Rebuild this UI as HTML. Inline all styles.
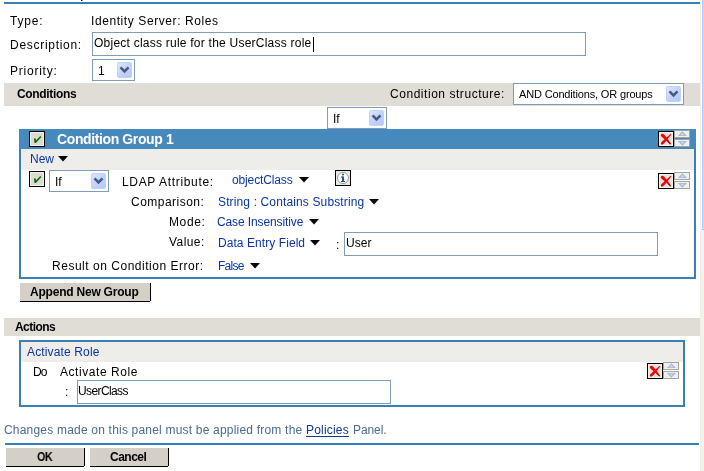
<!DOCTYPE html>
<html><head><meta charset="utf-8">
<style>
html,body{margin:0;padding:0;background:#fff;width:704px;height:471px;overflow:hidden;position:relative}
body{font-family:"Liberation Sans",sans-serif;font-size:12px;color:#000}
.a{position:absolute}
.a svg{display:block}
.t{position:absolute;white-space:nowrap;font-size:12px;line-height:12px;will-change:transform}
.dd{position:absolute;width:15px;height:16px;box-sizing:border-box;border-radius:2px;
 background:linear-gradient(135deg,#dce6fd 0%,#c3d3fd 50%,#b4c8fa 100%);border:1px solid #c3d2f4}
.dd svg{position:absolute;left:-1px;top:-1px}
</style></head><body>
<div class="a" style="left:700px;top:0px;width:4px;height:471px;background:#efeee8;"></div>
<div class="a" style="left:701px;top:230px;width:3px;height:241px;background:#f3f2ed;"></div>
<div class="a" style="left:701px;top:0px;width:1px;height:229px;background:#fdfdfb;"></div>
<div class="a" style="left:702px;top:0px;width:1px;height:229px;background:#b9caf4;"></div>
<div class="a" style="left:703px;top:0px;width:1px;height:228px;background:#c9d7fc;"></div>
<div class="a" style="left:703px;top:228px;width:1px;height:1px;background:#eef2fd;"></div>
<div class="a" style="left:703px;top:229px;width:1px;height:1px;background:#98b0e4;"></div>
<div class="a" style="left:702px;top:229px;width:1px;height:1px;background:#c0cbe6;"></div>
<div class="a" style="left:81px;top:0px;width:1px;height:1px;background:#000;"></div>
<div class="a" style="left:82px;top:0px;width:1px;height:1px;background:#999;"></div>
<div class="a" style="left:4px;top:2px;width:696px;height:2px;background:#3a7fb6;"></div>
<div class="t" style="left:10px;top:15px;font-size:12px;line-height:12px;letter-spacing:0.8px;">Type:</div>
<div class="t" style="left:91px;top:15px;font-size:12px;line-height:12px;letter-spacing:0.586px;">Identity Server: Roles</div>
<div class="t" style="left:10px;top:39px;font-size:12px;line-height:12px;letter-spacing:0.709px;">Description:</div>
<div class="a" style="left:92px;top:32px;width:494px;height:24px;box-sizing:border-box;border:1px solid #7f9db9;background:#fff"></div>
<div class="t" style="left:94px;top:37px;font-size:12px;line-height:12px;letter-spacing:0.236px;">Object class rule for the UserClass role</div>
<div class="a" style="left:313px;top:37px;width:1px;height:15px;background:#000;"></div>
<div class="t" style="left:10px;top:65px;font-size:12px;line-height:12px;letter-spacing:0.763px;">Priority:</div>
<div class="a" style="left:92px;top:59px;width:43px;height:22px;box-sizing:border-box;border:1px solid #7f9db9;background:#fff"></div>
<div class="t" style="left:98px;top:65px">1</div>
<div class="dd" style="left:117px;top:62px"><svg width="15" height="16" viewBox="0 0 15 16"><path d="M3.5 5.4 L7.5 9.4 L11.5 5.4" stroke="#475b7e" stroke-width="2.6" fill="none" stroke-linecap="butt"/></svg></div>
<div class="a" style="left:4px;top:83px;width:696px;height:23px;background:#e0ddd7;"></div>
<div class="t" style="left:17px;top:88px;font-size:12px;line-height:12px;letter-spacing:-0.344px;font-weight:bold;">Conditions</div>
<div class="t" style="left:390px;top:88px;font-size:12px;line-height:12px;letter-spacing:0.542px;">Condition structure:</div>
<div class="a" style="left:513px;top:83px;width:171px;height:22px;box-sizing:border-box;border:1px solid #7f9db9;background:#fff"></div>
<div class="t" style="left:519px;top:89px;font-size:11px;line-height:11px;letter-spacing:-0.158px;">AND Conditions, OR groups</div>
<div class="dd" style="left:666px;top:86px"><svg width="15" height="16" viewBox="0 0 15 16"><path d="M3.5 5.4 L7.5 9.4 L11.5 5.4" stroke="#475b7e" stroke-width="2.6" fill="none" stroke-linecap="butt"/></svg></div>
<div class="a" style="left:327px;top:107px;width:60px;height:22px;box-sizing:border-box;border:1px solid #7f9db9;background:#fff"></div>
<div class="t" style="left:333px;top:113px">If</div>
<div class="dd" style="left:369px;top:110px"><svg width="15" height="16" viewBox="0 0 15 16"><path d="M3.5 5.4 L7.5 9.4 L11.5 5.4" stroke="#475b7e" stroke-width="2.6" fill="none" stroke-linecap="butt"/></svg></div>
<div class="a" style="left:19px;top:129px;width:677px;height:150px;box-sizing:border-box;border:2px solid #3a7fb6;border-top:0"></div>
<div class="a" style="left:19px;top:129px;width:677px;height:20px;background:#4689bd;"></div>
<div class="a" style="left:21px;top:149px;width:673px;height:21px;background:#eeedea;"></div>
<div class="a" style="left:29px;top:131px;width:16px;height:16px"><svg width="16" height="16" viewBox="0 0 16 16"><rect x="0.5" y="0.5" width="15" height="15" fill="#dcdad1" stroke="#000"/><rect x="1.5" y="1.5" width="13" height="13" fill="none" stroke="#f3f2ec" stroke-width="1"/><path d="M4.9 7.4 L6.9 7.6 L7.0 9.6 L11.3 5.0 L12.4 6.1 L6.9 12.1 L5.5 12.1 Z" fill="#087008"/></svg></div>
<div class="t" style="left:57px;top:132px;font-size:14px;line-height:14px;letter-spacing:-0.388px;font-weight:bold;color:#fff;">Condition Group 1</div>
<div class="a" style="left:658px;top:131px;width:16px;height:16px"><svg width="16" height="16" viewBox="0 0 16 16"><rect x="0.5" y="0.5" width="15" height="15" fill="#e4e2dc" stroke="#000"/><rect x="1.5" y="1.5" width="13" height="13" fill="none" stroke="#f2f1ec"/><path d="M3.0 3.6 C3.6 2.6, 5.2 2.5, 6.0 3.4 L9.4 7.4 L13.0 12.8 L12.2 13.5 L8.0 9.4 L3.4 5.4 C2.7 4.8, 2.6 4.1, 3.0 3.6 Z" fill="#f00000"/><path d="M12.4 2.9 L13.3 3.5 L9.4 8.2 L5.4 12.9 C4.8 13.7, 3.5 13.8, 3.0 13.0 C2.7 12.3, 3.0 11.6, 3.6 11.0 L8.0 7.0 Z" fill="#f00000"/><path d="M9.6 9.0 L12.9 12.8 L12.3 13.5 L10.2 11.2 Z" fill="#7a0000" opacity="0.7"/><path d="M5.6 12.6 L8.6 9.2 L8.2 10.2 L5.6 13.2 Z" fill="#7a0000" opacity="0.5"/></svg></div>
<div class="a" style="left:674px;top:130px;width:16px;height:17px"><svg width="16" height="17" viewBox="0 0 16 17"><rect x="0.5" y="0.5" width="15" height="7" fill="#f1f0ec" stroke="#a6a29c"/><rect x="0.5" y="9.5" width="15" height="7" fill="#f1f0ec" stroke="#a6a29c"/><path d="M3.8 6.0 L8.4 1.2 L13.0 6.0 Z" fill="#9fbadd"/><path d="M6.2 5.2 L8.4 2.8 L10.6 5.2 Z" fill="#c6d9ef"/><path d="M3.8 10.9 L8.4 15.8 L13.0 10.9 Z" fill="#9fbadd"/><path d="M6.2 11.7 L8.4 14.1 L10.6 11.7 Z" fill="#c6d9ef"/></svg></div>
<div class="t" style="left:30px;top:153px;font-size:12px;line-height:12px;letter-spacing:-0.0px;color:#0a35a8;">New</div>
<div class="a" style="left:58px;top:156px;width:10px;height:6px"><svg width="10" height="6" viewBox="0 0 10 6"><path d="M0 0 L10 0 L5 5.5 Z" fill="#000"/></svg></div>
<div class="a" style="left:29px;top:171px;width:16px;height:16px"><svg width="16" height="16" viewBox="0 0 16 16"><rect x="0.5" y="0.5" width="15" height="15" fill="#dcdad1" stroke="#000"/><rect x="1.5" y="1.5" width="13" height="13" fill="none" stroke="#f3f2ec" stroke-width="1"/><path d="M4.9 7.4 L6.9 7.6 L7.0 9.6 L11.3 5.0 L12.4 6.1 L6.9 12.1 L5.5 12.1 Z" fill="#087008"/></svg></div>
<div class="a" style="left:49px;top:170px;width:60px;height:22px;box-sizing:border-box;border:1px solid #7f9db9;background:#fff"></div>
<div class="t" style="left:55px;top:176px">If</div>
<div class="dd" style="left:91px;top:173px"><svg width="15" height="16" viewBox="0 0 15 16"><path d="M3.5 5.4 L7.5 9.4 L11.5 5.4" stroke="#475b7e" stroke-width="2.6" fill="none" stroke-linecap="butt"/></svg></div>
<div class="t" style="left:122px;top:176px;font-size:12px;line-height:12px;letter-spacing:0.664px;">LDAP Attribute:</div>
<div class="t" style="left:232px;top:174px;font-size:12px;line-height:12px;letter-spacing:-0.14px;color:#0a35a8;">objectClass</div>
<div class="a" style="left:299px;top:177px;width:10px;height:6px"><svg width="10" height="6" viewBox="0 0 10 6"><path d="M0 0 L10 0 L5 5.5 Z" fill="#000"/></svg></div>
<div class="a" style="left:335px;top:170px;width:16px;height:16px"><svg width="16" height="16" viewBox="0 0 16 16"><rect x="0.5" y="0.5" width="15" height="15" fill="#e9e7df" stroke="#000"/><circle cx="8" cy="8" r="5.5" fill="#fff" stroke="#999" stroke-width="1"/><rect x="7" y="6.5" width="2" height="5" fill="#1b5a98"/><rect x="6" y="6.5" width="2" height="1" fill="#1b5a98"/><rect x="6" y="11" width="4" height="1" fill="#1b5a98"/><rect x="7" y="3.8" width="2" height="1.5" fill="#1b5a98"/></svg></div>
<div class="a" style="left:658px;top:173px;width:16px;height:16px"><svg width="16" height="16" viewBox="0 0 16 16"><rect x="0.5" y="0.5" width="15" height="15" fill="#e4e2dc" stroke="#000"/><rect x="1.5" y="1.5" width="13" height="13" fill="none" stroke="#f2f1ec"/><path d="M3.0 3.6 C3.6 2.6, 5.2 2.5, 6.0 3.4 L9.4 7.4 L13.0 12.8 L12.2 13.5 L8.0 9.4 L3.4 5.4 C2.7 4.8, 2.6 4.1, 3.0 3.6 Z" fill="#f00000"/><path d="M12.4 2.9 L13.3 3.5 L9.4 8.2 L5.4 12.9 C4.8 13.7, 3.5 13.8, 3.0 13.0 C2.7 12.3, 3.0 11.6, 3.6 11.0 L8.0 7.0 Z" fill="#f00000"/><path d="M9.6 9.0 L12.9 12.8 L12.3 13.5 L10.2 11.2 Z" fill="#7a0000" opacity="0.7"/><path d="M5.6 12.6 L8.6 9.2 L8.2 10.2 L5.6 13.2 Z" fill="#7a0000" opacity="0.5"/></svg></div>
<div class="a" style="left:674px;top:172px;width:16px;height:17px"><svg width="16" height="17" viewBox="0 0 16 17"><rect x="0.5" y="0.5" width="15" height="7" fill="#f1f0ec" stroke="#a6a29c"/><rect x="0.5" y="9.5" width="15" height="7" fill="#f1f0ec" stroke="#a6a29c"/><path d="M3.8 6.0 L8.4 1.2 L13.0 6.0 Z" fill="#9fbadd"/><path d="M6.2 5.2 L8.4 2.8 L10.6 5.2 Z" fill="#c6d9ef"/><path d="M3.8 10.9 L8.4 15.8 L13.0 10.9 Z" fill="#9fbadd"/><path d="M6.2 11.7 L8.4 14.1 L10.6 11.7 Z" fill="#c6d9ef"/></svg></div>
<div class="t" style="left:131px;top:196px;font-size:12px;line-height:12px;letter-spacing:0.48px;">Comparison:</div>
<div class="t" style="left:218px;top:196px;font-size:12px;line-height:12px;letter-spacing:0.135px;color:#0a35a8;">String : Contains Substring</div>
<div class="a" style="left:369px;top:199px;width:10px;height:6px"><svg width="10" height="6" viewBox="0 0 10 6"><path d="M0 0 L10 0 L5 5.5 Z" fill="#000"/></svg></div>
<div class="t" style="left:169px;top:216px;font-size:12px;line-height:12px;letter-spacing:0.625px;">Mode:</div>
<div class="t" style="left:217px;top:216px;font-size:12px;line-height:12px;letter-spacing:-0.113px;color:#0a35a8;">Case Insensitive</div>
<div class="a" style="left:309px;top:219px;width:10px;height:6px"><svg width="10" height="6" viewBox="0 0 10 6"><path d="M0 0 L10 0 L5 5.5 Z" fill="#000"/></svg></div>
<div class="t" style="left:169px;top:236px;font-size:12px;line-height:12px;letter-spacing:0.42px;">Value:</div>
<div class="t" style="left:218px;top:237px;font-size:12px;line-height:12px;letter-spacing:0.067px;color:#0a35a8;">Data Entry Field</div>
<div class="a" style="left:310px;top:240px;width:10px;height:6px"><svg width="10" height="6" viewBox="0 0 10 6"><path d="M0 0 L10 0 L5 5.5 Z" fill="#000"/></svg></div>
<div class="t" style="left:336px;top:239px">:</div>
<div class="a" style="left:344px;top:232px;width:314px;height:24px;box-sizing:border-box;border:1px solid #7f9db9;background:#fff"></div>
<div class="t" style="left:346px;top:237px;font-size:12px;line-height:12px;letter-spacing:0.067px;">User</div>
<div class="t" style="left:52px;top:260px;font-size:12px;line-height:12px;letter-spacing:0.524px;">Result on Condition Error:</div>
<div class="t" style="left:218px;top:260px;font-size:12px;line-height:12px;letter-spacing:-0.75px;color:#0a35a8;">False</div>
<div class="a" style="left:250px;top:263px;width:10px;height:6px"><svg width="10" height="6" viewBox="0 0 10 6"><path d="M0 0 L10 0 L5 5.5 Z" fill="#000"/></svg></div>
<div class="a" style="left:20px;top:283px;width:130px;height:18px;background:#d4d0c8"></div>
<div class="a" style="left:150px;top:283px;width:1px;height:18px;background:#000"></div>
<div class="a" style="left:20px;top:301px;width:130px;height:1px;background:#000"></div>
<div class="t" style="left:30px;top:286px;font-size:12px;line-height:12px;letter-spacing:-0.217px;font-weight:bold;">Append New Group</div>
<div class="a" style="left:4px;top:318px;width:696px;height:18px;background:#e0ddd7;"></div>
<div class="t" style="left:15px;top:321px;font-size:12px;line-height:12px;letter-spacing:-0.55px;font-weight:bold;">Actions</div>
<div class="a" style="left:19px;top:340px;width:666px;height:67px;box-sizing:border-box;border:2px solid #3a7fb6;"></div>
<div class="a" style="left:21px;top:342px;width:662px;height:20px;background:#eeedea;"></div>
<div class="t" style="left:27px;top:346px;font-size:12px;line-height:12px;letter-spacing:0.142px;color:#0a35a8;">Activate Role</div>
<div class="t" style="left:33px;top:366px;font-size:12px;line-height:12px;letter-spacing:-1.0px;">Do</div>
<div class="t" style="left:60px;top:366px;font-size:12px;line-height:12px;letter-spacing:0.558px;">Activate Role</div>
<div class="t" style="left:65px;top:386px">:</div>
<div class="a" style="left:77px;top:380px;width:314px;height:24px;box-sizing:border-box;border:1px solid #7f9db9;background:#fff"></div>
<div class="t" style="left:78px;top:385px;font-size:12px;line-height:12px;letter-spacing:-0.613px;">UserClass</div>
<div class="a" style="left:647px;top:363px;width:16px;height:16px"><svg width="16" height="16" viewBox="0 0 16 16"><rect x="0.5" y="0.5" width="15" height="15" fill="#e4e2dc" stroke="#000"/><rect x="1.5" y="1.5" width="13" height="13" fill="none" stroke="#f2f1ec"/><path d="M3.0 3.6 C3.6 2.6, 5.2 2.5, 6.0 3.4 L9.4 7.4 L13.0 12.8 L12.2 13.5 L8.0 9.4 L3.4 5.4 C2.7 4.8, 2.6 4.1, 3.0 3.6 Z" fill="#f00000"/><path d="M12.4 2.9 L13.3 3.5 L9.4 8.2 L5.4 12.9 C4.8 13.7, 3.5 13.8, 3.0 13.0 C2.7 12.3, 3.0 11.6, 3.6 11.0 L8.0 7.0 Z" fill="#f00000"/><path d="M9.6 9.0 L12.9 12.8 L12.3 13.5 L10.2 11.2 Z" fill="#7a0000" opacity="0.7"/><path d="M5.6 12.6 L8.6 9.2 L8.2 10.2 L5.6 13.2 Z" fill="#7a0000" opacity="0.5"/></svg></div>
<div class="a" style="left:663px;top:362px;width:16px;height:17px"><svg width="16" height="17" viewBox="0 0 16 17"><rect x="0.5" y="0.5" width="15" height="7" fill="#f1f0ec" stroke="#a6a29c"/><rect x="0.5" y="9.5" width="15" height="7" fill="#f1f0ec" stroke="#a6a29c"/><path d="M3.8 6.0 L8.4 1.2 L13.0 6.0 Z" fill="#9fbadd"/><path d="M6.2 5.2 L8.4 2.8 L10.6 5.2 Z" fill="#c6d9ef"/><path d="M3.8 10.9 L8.4 15.8 L13.0 10.9 Z" fill="#9fbadd"/><path d="M6.2 11.7 L8.4 14.1 L10.6 11.7 Z" fill="#c6d9ef"/></svg></div>
<div class="t" style="left:4px;top:424px;font-size:12px;line-height:12px;letter-spacing:0.2px;color:#4a6c90;">Changes made on this panel must be applied from the</div>
<div class="t" style="left:306px;top:424px;font-size:12px;line-height:12px;letter-spacing:0.186px;color:#0d3a8c;text-decoration:underline;text-underline-offset:2px;">Policies</div>
<div class="t" style="left:353px;top:424px;font-size:12px;line-height:12px;letter-spacing:-0.1px;color:#4a6c90;">Panel.</div>
<div class="a" style="left:5px;top:443px;width:694px;height:2px;background:#3a7fb6;"></div>
<div class="a" style="left:6px;top:448px;width:78px;height:18px;background:#d4d0c8"></div>
<div class="a" style="left:84px;top:448px;width:1px;height:18px;background:#000"></div>
<div class="a" style="left:6px;top:466px;width:78px;height:1px;background:#000"></div>
<div class="t" style="left:37px;top:451px;font-size:12px;line-height:12px;letter-spacing:-0.5px;font-weight:bold;transform:scaleX(0.9);transform-origin:0 0;">OK</div>
<div class="a" style="left:90px;top:448px;width:78px;height:18px;background:#d4d0c8"></div>
<div class="a" style="left:168px;top:448px;width:1px;height:18px;background:#000"></div>
<div class="a" style="left:90px;top:466px;width:78px;height:1px;background:#000"></div>
<div class="t" style="left:110px;top:451px;font-size:12px;line-height:12px;letter-spacing:-0.5px;font-weight:bold;">Cancel</div>
</body></html>
